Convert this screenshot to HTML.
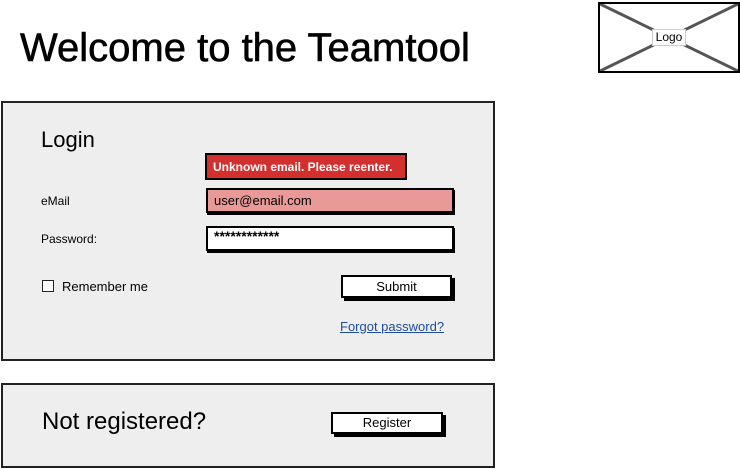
<!DOCTYPE html>
<html><head><meta charset="utf-8"><style>
*{margin:0;padding:0;box-sizing:border-box}
body{width:740px;height:469px;background:#fff;position:relative;overflow:hidden;font-family:"Liberation Sans",sans-serif;color:#000}
.a{position:absolute;white-space:nowrap}
.panel{background:#eeeeee;border:2px solid #222}
.btn{background:#fff;border:2px solid #000;box-shadow:3px 3px 0 #000;text-align:center;font-size:13px}
.fld{border:2px solid #000;box-shadow:1px 2px 0 #000;font-size:13px;padding-left:6px}
</style></head><body>
<div class="a" style="left:20px;top:25px;font-size:40px;line-height:46px;-webkit-text-stroke:0.6px #000">Welcome to the Teamtool</div>

<div class="a" style="left:598px;top:2px;width:142px;height:71px;border:2px solid #000;background:#fff">
<svg width="138" height="67" style="position:absolute;left:0;top:0"><line x1="0" y1="0" x2="138" y2="67" stroke="#555" stroke-width="3"/><line x1="138" y1="0" x2="0" y2="67" stroke="#555" stroke-width="3"/></svg>
<div class="a" style="left:52px;top:25px;width:34px;height:17px;background:#fff;border:1px solid #ccc;font-size:12px;text-align:center;line-height:15px">Logo</div>
</div>

<div class="a panel" style="left:1px;top:101px;width:494px;height:260px"></div>
<div class="a" style="left:41px;top:127px;font-size:22px">Login</div>
<div class="a" style="left:205px;top:153px;width:202px;height:27px;background:#d22f2f;border:2px solid #000;color:#fff;font-size:12px;font-weight:bold;padding:5px 0 0 6px">Unknown email. Please reenter.</div>
<div class="a" style="left:41px;top:194px;font-size:12px">eMail</div>
<div class="a fld" style="left:206px;top:188px;width:248px;height:25px;background:#ea9999;line-height:21px">user@email.com</div>
<div class="a" style="left:41px;top:232px;font-size:12px">Password:</div>
<div class="a fld" style="left:206px;top:226px;width:248px;height:25px;background:#fff;line-height:17px;font-weight:bold;font-size:14px">************</div>
<div class="a" style="left:42px;top:280px;width:12px;height:12px;border:1.5px solid #222;background:#fff"></div>
<div class="a" style="left:62px;top:279px;font-size:13px">Remember me</div>
<div class="a btn" style="left:341px;top:275px;width:111px;height:23px;line-height:19px">Submit</div>
<div class="a" style="left:340px;top:319px;font-size:13px;color:#1f4d9b;text-decoration:underline">Forgot password?</div>

<div class="a panel" style="left:1px;top:383px;width:494px;height:85px"></div>
<div class="a" style="left:42px;top:408px;font-size:24px">Not registered?</div>
<div class="a btn" style="left:331px;top:412px;width:112px;height:22px;line-height:18px">Register</div>
</body></html>
